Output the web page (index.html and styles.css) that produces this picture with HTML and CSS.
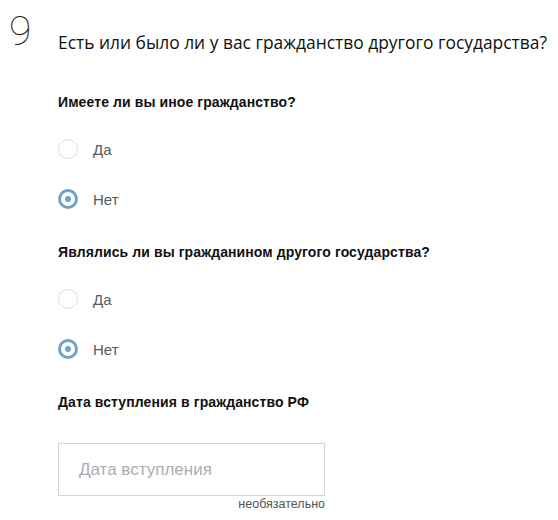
FILE: index.html
```html
<!DOCTYPE html>
<html lang="ru">
<head>
<meta charset="utf-8">
<link rel="stylesheet" href="styles.css">
</head>
<body>
<div class="step">
  <div class="step-head">
    <div class="step-num">9</div>
    <h1 class="step-title">Есть или было ли у вас гражданство другого государства?</h1>
  </div>
  <div class="step-body">
    <div class="group">
      <div class="question">Имеете ли вы иное гражданство?</div>
      <label class="radio-row"><span class="radio"></span><span class="radio-label">Да</span></label>
      <label class="radio-row"><span class="radio checked"></span><span class="radio-label">Нет</span></label>
    </div>
    <div class="group">
      <div class="question">Являлись ли вы гражданином другого государства?</div>
      <label class="radio-row"><span class="radio"></span><span class="radio-label">Да</span></label>
      <label class="radio-row"><span class="radio checked"></span><span class="radio-label">Нет</span></label>
    </div>
    <div class="group">
      <div class="question">Дата вступления в гражданство РФ</div>
      <div class="field">
        <div class="input"><span class="placeholder">Дата вступления</span></div>
        <div class="hint">необязательно</div>
      </div>
    </div>
  </div>
</div>
</body>
</html>
```
FILE: styles.css
```css
html, body {
  margin: 0;
  padding: 0;
  background: #fff;
}
body {
  font-family: "Liberation Sans", Arial, sans-serif;
  color: #111;
}
.step-head {
  position: relative;
  padding-left: 58px;
  padding-top: 30px;
}
.step-num {
  position: absolute;
  left: 9px;
  top: 11px;
  font-family: Roboto, sans-serif;
  font-weight: 100;
  font-size: 41px;
  line-height: 40px;
  color: #222;
}
.step-title {
  margin: 0;
  font-family: "Open Sans", sans-serif;
  font-weight: 400;
  font-size: 17.4px;
  line-height: 24px;
  color: #111;
  white-space: nowrap;
}
.step-body {
  padding-left: 58px;
  padding-top: 38px;
}
.group {
  margin-bottom: 18px;
}
.question {
  font-weight: 700;
  font-size: 14px;
  line-height: 20px;
  letter-spacing: 0.1px;
  color: #111;
  margin-bottom: 12px;
}
.radio-row {
  display: flex;
  align-items: center;
  height: 50px;
}
.radio {
  box-sizing: border-box;
  width: 20px;
  height: 20px;
  border-radius: 50%;
  border: 1px solid #dcdcdc;
  display: flex;
  align-items: center;
  justify-content: center;
  margin-right: 15px;
  flex: none;
}
.radio.checked {
  border: 3px solid #6ea2cc;
}
.radio.checked::after {
  content: "";
  width: 6px;
  height: 6px;
  border-radius: 50%;
  background: #6ea2cc;
}
.radio-label {
  font-size: 15px;
  color: #5a5a5a;
}
.field {
  width: 267px;
  margin-top: 31px;
}
.input {
  box-sizing: border-box;
  height: 53px;
  border: 1px solid #d4d4d4;
  display: flex;
  align-items: center;
  padding-left: 20px;
}
.placeholder {
  font-size: 17px;
  color: #a9adb2;
}
.hint {
  text-align: right;
  font-size: 12.5px;
  line-height: 16px;
  color: #555;
}
```
